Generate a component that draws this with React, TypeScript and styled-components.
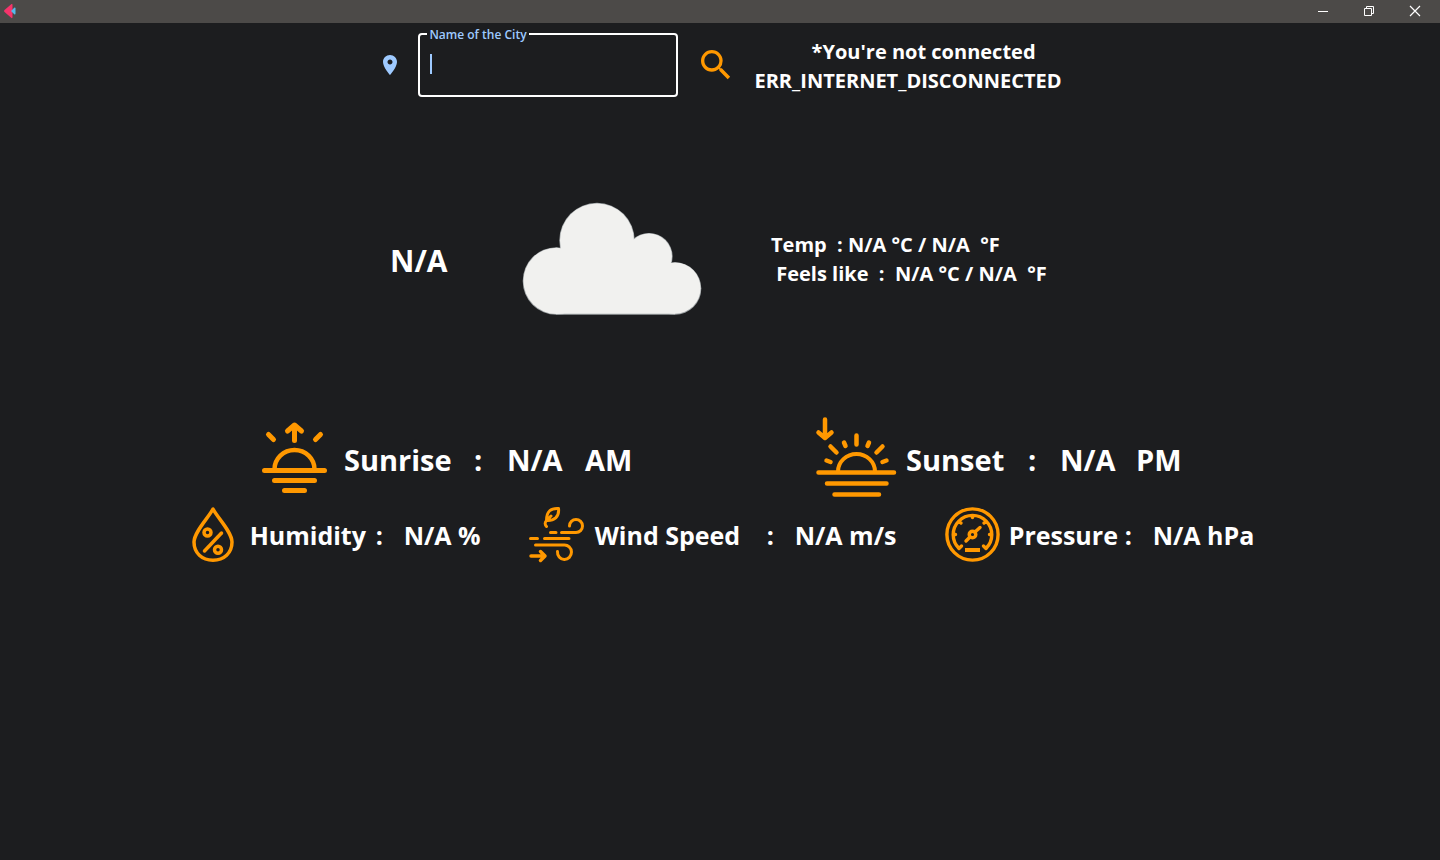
import React from "react";
import styled, { createGlobalStyle } from "styled-components";

const accent = "#ff9800";
const sky = "#9ecaff";
const surface = "#1c1d1f";

const GlobalStyle = createGlobalStyle`
  *, *::before, *::after { box-sizing: border-box; }
  body {
    margin: 0;
    background: ${surface};
    color: #fff;
    font-family: "Open Sans", "Noto Sans", sans-serif;
    font-weight: 700;
  }
`;

const TitleBar = styled.header`
  display: flex;
  justify-content: space-between;
  height: 23px;
  padding: 0 2px 0 4px;
  background: #4c4a48;
`;

const Logo = styled.svg`
  display: block;
  width: 12px;
  height: 16px;
  margin-top: 3px;
`;

const WindowControls = styled.div`
  display: flex;
`;

const WindowButton = styled.button`
  display: flex;
  align-items: center;
  justify-content: center;
  width: 46px;
  height: 21px;
  padding: 0;
  border: 0;
  background: none;
  color: #fff;
`;

const Main = styled.main`
  display: flex;
  flex-direction: column;
  padding-top: 10px;
`;

const SearchRow = styled.form`
  display: flex;
  align-items: center;
  justify-content: center;
  gap: 18px;
  height: 64px;
`;

const FieldGroup = styled.div`
  display: flex;
  align-items: center;
  gap: 16px;
`;

const Field = styled.div`
  position: relative;
  width: 260px;
  height: 64px;

  &::after {
    content: "";
    position: absolute;
    left: 12px;
    top: 21px;
    width: 2px;
    height: 20px;
    background: ${sky};
  }
`;

const FieldLabel = styled.label`
  position: absolute;
  left: 9px;
  top: -6px;
  width: 102px;
  padding-left: 2px;
  background: ${surface};
  color: ${sky};
  font-size: 12px;
  line-height: 16px;
  font-weight: 600;
  white-space: nowrap;
`;

const CityInput = styled.input`
  width: 100%;
  height: 100%;
  padding: 0 12px;
  border: 2px solid #fff;
  border-radius: 4px;
  outline: 0;
  background: transparent;
  color: #fff;
  font: inherit;
  font-size: 16px;
  caret-color: transparent;
`;

const SearchButton = styled.button`
  width: 40px;
  height: 40px;
  padding: 0;
  border: 0;
  background: none;
  color: ${accent};
`;

const Icon = styled.svg`
  display: block;
  flex: none;
  overflow: visible;
`;

const LineIcon = styled(Icon)`
  fill: none;
  stroke: ${accent};
  stroke-linecap: round;
  stroke-linejoin: round;
`;

const TextBlock = styled.p`
  margin: 0;
  font-size: 20px;
  line-height: 29px;
  white-space: pre;
`;

const Message = styled(TextBlock)`
  padding-top: 2px;
  text-align: center;
`;

const Readings = styled(TextBlock)`
  min-width: 279px;
`;

const CurrentRow = styled.section`
  display: flex;
  align-items: center;
  justify-content: center;
  gap: 68px;
  height: 320px;
  padding-top: 3px;
`;

const Condition = styled.h1`
  min-width: 63px;
  margin: 0;
  padding-top: 4px;
  font-size: 30px;
  line-height: 40px;
`;

const StatRow = styled.section<{ $gap: number; $height: number }>`
  display: flex;
  align-items: center;
  justify-content: center;
  gap: ${(p) => p.$gap}px;
  height: ${(p) => p.$height}px;
  padding-left: 6px;
`;

const StatBox = styled.div<{ $gap: number }>`
  display: flex;
  align-items: center;
  gap: ${(p) => p.$gap}px;
`;

const StatText = styled.div<{ $large?: boolean }>`
  display: flex;
  padding-top: ${(p) => (p.$large ? 5 : 0)}px;
  font-size: ${(p) => (p.$large ? 29 : 25)}px;
  line-height: 40px;
  white-space: nowrap;
`;

const Part = styled.span<{ $width: number }>`
  min-width: ${(p) => p.$width}px;
`;

type StatProps = {
  icon: React.ReactNode;
  gap: number;
  large?: boolean;
  parts: [string, number][];
};

function Stat({ icon, gap, large, parts }: StatProps) {
  return (
    <StatBox $gap={gap}>
      {icon}
      <StatText $large={large}>
        {parts.map(([text, width]) => (
          <Part key={text} $width={width}>{text}</Part>
        ))}
      </StatText>
    </StatBox>
  );
}

const SunriseIcon = () => (
  <LineIcon width="65" height="70" viewBox="12 12 65 70" strokeWidth="5" aria-hidden="true">
    <path d="M44.5 15V30.5M37.500 21L44.500 15L51.500 21M18.500 24.500L23.500 29.500M70.500 24.500L65.500 29.500M14.500 60.500H74.500M24.500 70.500H64.500M34.500 80.500H54.500" />
    <path d="M24.500 60V59.500A20 19.500 0 0 1 64.500 59.500V60" strokeWidth="4.500" />
  </LineIcon>
);

const SunsetIcon = () => (
  <LineIcon width="80" height="80" viewBox="16 7 80 80" strokeWidth="4.500" aria-hidden="true">
    <path d="M25 9.500V28M18.500 22.500L25 28L31.500 22.500M56.500 25.500V34.500M44 32.500L45.500 36M69 32.500L67.500 36M30.500 36.500L36.500 42.500M82.500 36.500L76.500 42.500M26.500 50.500L30.500 52M86.500 50.500L82.500 52M18.500 62.500H94M27 73.500H86.500M34.500 84.500H79" />
    <path d="M38 62V61.500A18.500 17.500 0 0 1 75 61.500V62" strokeWidth="4" />
  </LineIcon>
);

const HumidityIcon = () => (
  <LineIcon width="42" height="56" viewBox="12 7 42 56" strokeWidth="3.500" aria-hidden="true">
    <path d="M33 9C29 17 14 32 14 42C14 53 22 60.200 33 60.200S52 53 52 42C52 32 37 17 33 9Z" />
    <circle cx="27.500" cy="32.500" r="3.500" />
    <circle cx="38" cy="49.800" r="3.500" />
    <path d="M24.500 51L41.500 33" />
  </LineIcon>
);

const WindIcon = () => (
  <LineIcon width="55" height="56" viewBox="9 7 55 56" strokeWidth="3" aria-hidden="true">
    <path d="M38.500 8.500C31 8 26.500 11 26.500 20.500C34 21 39.500 17 38.500 8.500ZM31 16L26.500 20.500C24.500 22.500 25 25 26.500 26.500" />
    <path d="M30.500 32.500H36M41.500 32.500H56A6.500 6.500 0 1 0 49.500 26M10.500 38.500H17.500M24.500 38.500H49M15.500 45H44A7 7.200 0 1 1 37.500 51.500" />
    <path d="M11 56H24M20.500 51.500L25 56L20.500 60.500" strokeWidth="3.500" />
  </LineIcon>
);

const PressureIcon = () => (
  <LineIcon width="55" height="56" viewBox="9.500 7 55 56" strokeWidth="3.400" aria-hidden="true">
    <circle cx="37" cy="34.500" r="25.600" />
    <path d="M26 46L23.500 48.500A19.300 19.300 0 1 1 50.500 48.500L48 46M37 15.500V17.500M18.500 34.500H20M55.500 34.500H54M24 21.500L25.500 23M50 21.500L48.500 23" />
    <circle cx="37" cy="34.500" r="3.300" />
    <path d="M30.500 41L34.500 37M39.500 32L44.500 27.500" />
    <path d="M29.500 50H44.500" strokeWidth="4" strokeLinecap="butt" />
  </LineIcon>
);

export default function App() {
  return (
    <>
      <GlobalStyle />
      <TitleBar>
        <Logo viewBox="0 0 12 16" aria-hidden="true">
          <path d="M7.500 1Q8.500 .5 8.500 2V14Q8.500 15.500 7.500 15L.5 9Q-.3 8 .5 7Z" fill="#f6346b" />
          <path d="M10.500 4.500Q11.500 4.300 11.500 5.500V10.500Q11.500 11.700 10.500 11.500L7 8Z" fill="#55b9ea" />
        </Logo>
        <WindowControls>
          <WindowButton type="button" aria-label="Minimize">
            <Icon width="10" height="10" viewBox="0 0 10 10"><path d="M0 5h10v1H0z" fill="currentColor" /></Icon>
          </WindowButton>
          <WindowButton type="button" aria-label="Restore">
            <Icon width="10" height="10" viewBox="0 0 10 10" fill="none" stroke="currentColor">
              <path d="M.5 2.500h7v7h-7zM2.500 2.500v-2h7v7h-2" />
            </Icon>
          </WindowButton>
          <WindowButton type="button" aria-label="Close">
            <Icon width="10" height="10" viewBox="0 0 10 10" stroke="currentColor">
              <path d="M0 0l10 10M10 0L0 10" strokeWidth="1.200" />
            </Icon>
          </WindowButton>
        </WindowControls>
      </TitleBar>

      <Main>
        <SearchRow onSubmit={(e) => e.preventDefault()}>
          <FieldGroup>
            <Icon width="24" height="24" viewBox="0 0 24 24" fill={sky} aria-hidden="true">
              <path d="M12 2C8.130 2 5 5.130 5 9c0 5.250 7 13 7 13s7-7.750 7-13c0-3.870-3.130-7-7-7zm0 9.500c-1.380 0-2.500-1.120-2.500-2.500s1.120-2.500 2.500-2.500 2.500 1.120 2.500 2.500-1.120 2.500-2.500 2.500z" />
            </Icon>
            <Field>
              <CityInput id="city" type="text" autoComplete="off" />
              <FieldLabel htmlFor="city">Name of the City</FieldLabel>
            </Field>
          </FieldGroup>
          <SearchButton type="submit" aria-label="Search">
            <Icon width="40" height="40" viewBox="0 0 24 24" fill="currentColor">
              <path d="M15.500 14h-.790l-.280-.270A6.471 6.471 0 0 0 16 9.500 6.500 6.500 0 1 0 9.500 16c1.610 0 3.090-.590 4.230-1.570l.270.280v.790l5 4.990L20.490 19l-4.990-5zm-6 0C7.010 14 5 11.990 5 9.500S7.010 5 9.500 5 14 7.010 14 9.500 11.990 14 9.500 14z" />
            </Icon>
          </SearchButton>
          <Message>{"      *You're not connected\nERR_INTERNET_DISCONNECTED"}</Message>
        </SearchRow>

        <CurrentRow>
          <Condition>N/A</Condition>
          <Icon width="182" height="114" viewBox="521 202 182 114" role="img" aria-label="Cloudy">
            <g fill="#9fa4a6">
              <circle cx="597" cy="240.500" r="37.700" />
              <circle cx="649" cy="256.500" r="23.600" />
              <circle cx="556.500" cy="281" r="33.800" />
              <circle cx="675" cy="288.500" r="26.300" />
              <path d="M556 280H675V314.800H556Z" />
            </g>
            <g fill="#f1f1ef">
              <circle cx="597" cy="240.500" r="37" />
              <circle cx="649" cy="256.500" r="22.900" />
              <circle cx="556.500" cy="280.800" r="33.100" />
              <circle cx="675" cy="288.200" r="25.600" />
              <path d="M556 250H660L670 264L675 270V313.800H556Z" />
            </g>
          </Icon>
          <Readings>{"Temp  : N/A °C / N/A  °F\n Feels like  :  N/A °C / N/A  °F"}</Readings>
        </CurrentRow>

        <StatRow $gap={181} $height={80}>
          <Stat large gap={17} icon={<SunriseIcon />} parts={[["Sunrise", 130], [":", 33], ["N/A", 78], ["AM", 50]]} />
          <Stat large gap={10} icon={<SunsetIcon />} parts={[["Sunset", 122], [":", 32], ["N/A", 76], ["PM", 48]]} />
        </StatRow>

        <StatRow $gap={46} $height={75}>
          <Stat gap={16} icon={<HumidityIcon />} parts={[["Humidity", 126], [":", 28], ["N/A %", 79]]} />
          <Stat gap={11} icon={<WindIcon />} parts={[["Wind Speed", 172], [":", 28], ["N/A m/s", 104]]} />
          <Stat gap={9} icon={<PressureIcon />} parts={[["Pressure", 116], [":", 28], ["N/A hPa", 101]]} />
        </StatRow>
      </Main>
    </>
  );
}
